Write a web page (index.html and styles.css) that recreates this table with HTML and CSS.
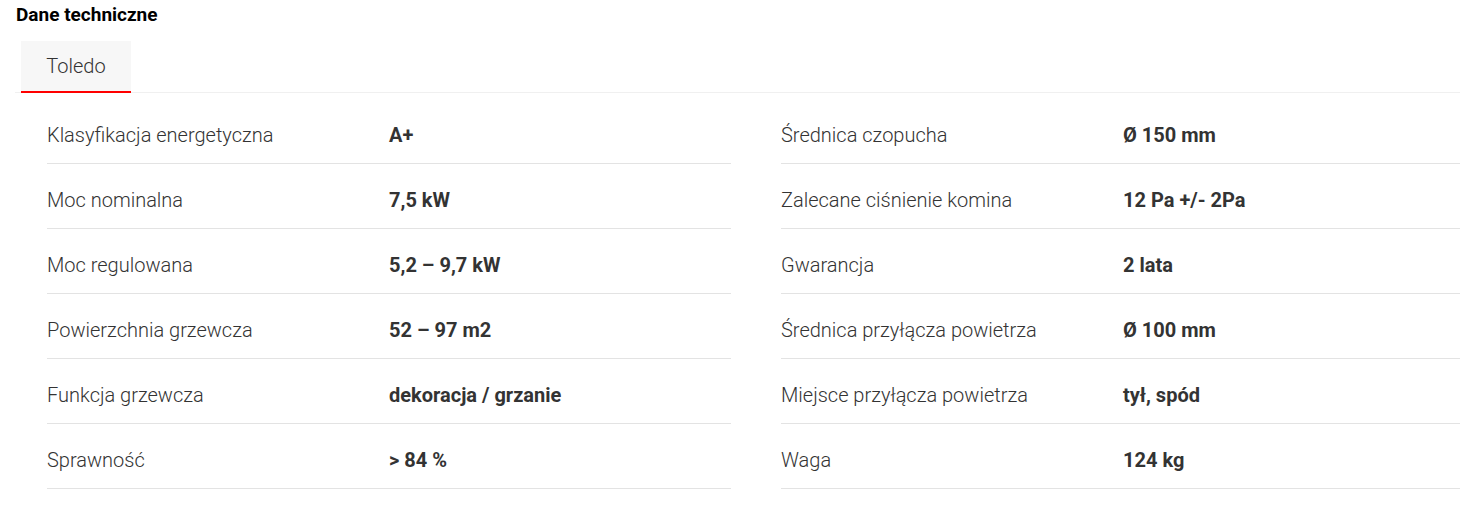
FILE: index.html
```html
<!DOCTYPE html>
<html lang="pl">
<head>
<meta charset="utf-8">
<link rel="stylesheet" href="styles.css">
</head>
<body>
<section class="specs">
  <h2 class="specs-title">Dane techniczne</h2>
  <div class="tabs">
    <div class="tab active">Toledo</div>
  </div>
  <div class="grid">
    <div class="col">
      <div class="row"><span class="label">Klasyfikacja energetyczna</span><span class="value">A+</span></div>
      <div class="row"><span class="label">Moc nominalna</span><span class="value">7,5 kW</span></div>
      <div class="row"><span class="label">Moc regulowana</span><span class="value">5,2 – 9,7 kW</span></div>
      <div class="row"><span class="label">Powierzchnia grzewcza</span><span class="value">52 – 97 m2</span></div>
      <div class="row"><span class="label">Funkcja grzewcza</span><span class="value">dekoracja / grzanie</span></div>
      <div class="row"><span class="label">Sprawność</span><span class="value">&gt; 84 %</span></div>
    </div>
    <div class="col">
      <div class="row"><span class="label">Średnica czopucha</span><span class="value">Ø 150 mm</span></div>
      <div class="row"><span class="label">Zalecane ciśnienie komina</span><span class="value">12 Pa +/- 2Pa</span></div>
      <div class="row"><span class="label">Gwarancja</span><span class="value">2 lata</span></div>
      <div class="row"><span class="label">Średnica przyłącza powietrza</span><span class="value">Ø 100 mm</span></div>
      <div class="row"><span class="label">Miejsce przyłącza powietrza</span><span class="value">tył, spód</span></div>
      <div class="row"><span class="label">Waga</span><span class="value">124 kg</span></div>
    </div>
  </div>
</section>
</body>
</html>
```
FILE: styles.css
```css
* { box-sizing: border-box; }
html, body { margin: 0; padding: 0; background: #fff; }
body {
  font-family: Roboto, "Liberation Sans", Arial, sans-serif;
  color: #333;
  overflow: hidden;
}
.specs { padding: 4px 0 0 15px; }
.specs-title {
  margin: 0 0 0 1px;
  font-size: 19px;
  line-height: 22px;
  font-weight: 700;
  color: #000;
}
.tabs {
  margin-top: 15px;
  display: flex;
  border-bottom: 1px solid #f0f0f0;
  padding-left: 6px;
}
.tab {
  width: 110px;
  height: 52px;
  background: #f7f7f7;
  font-size: 20px;
  font-weight: 300;
  color: #333;
  display: flex;
  align-items: center;
  justify-content: center;
  padding-bottom: 0;
  margin-bottom: -1px;
}
.tab.active { border-bottom: 2px solid #ff0000; }
.grid {
  display: grid;
  grid-template-columns: 684px 684px;
  column-gap: 50px;
  padding: 6px 0 0 32px;
}
.row {
  display: flex;
  align-items: center;
  height: 65px;
  border-bottom: 1px solid #e3e3e3;
  font-size: 20px;
  padding-top: 7px;
}
.label {
  width: 342px;
  font-weight: 300;
  color: #333;
}
.value {
  font-weight: 700;
  color: #333;
}
```
